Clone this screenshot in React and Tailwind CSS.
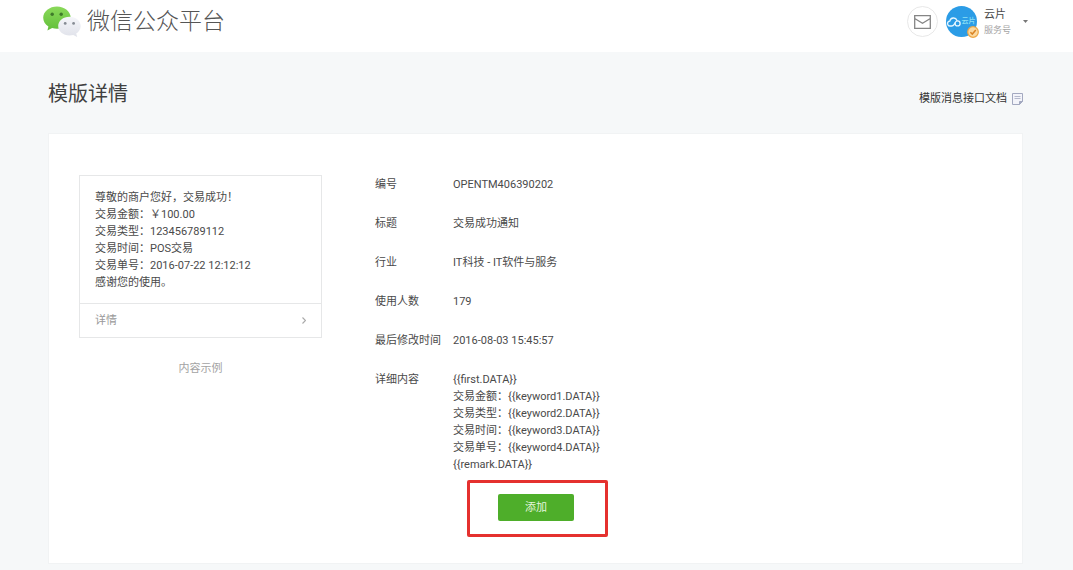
const example = [
  '尊敬的商户您好，交易成功！',
  '交易金额：￥100.00',
  '交易类型：123456789112',
  '交易时间：POS交易',
  '交易单号：2016-07-22 12:12:12',
  '感谢您的使用。',
];

const details = [
  ['编号', ['OPENTM406390202']],
  ['标题', ['交易成功通知']],
  ['行业', ['IT科技 - IT软件与服务']],
  ['使用人数', ['179']],
  ['最后修改时间', ['2016-08-03 15:45:57']],
  [
    '详细内容',
    [
      '{{first.DATA}}',
      '交易金额：{{keyword1.DATA}}',
      '交易类型：{{keyword2.DATA}}',
      '交易时间：{{keyword3.DATA}}',
      '交易单号：{{keyword4.DATA}}',
      '{{remark.DATA}}',
    ],
  ],
];

function WeChatLogo() {
  return (
    <svg className="h-8 w-[38px] shrink-0" viewBox="0 0 38 32" aria-hidden="true">
      <defs>
        <linearGradient id="green" x1="0" y1="0" x2="0" y2="1">
          <stop offset="0" stopColor="#8ad95a" />
          <stop offset="1" stopColor="#62bf3a" />
        </linearGradient>
        <linearGradient id="pale" x1="0" y1="0" x2="0" y2="1">
          <stop offset="0" stopColor="#f5f6fa" />
          <stop offset="1" stopColor="#e0e2ea" />
        </linearGradient>
      </defs>
      <path
        d="M14 .5C6.500.5.200 5.400.200 11.800c0 3.600 2 6.700 5.200 8.700L4.400 24.500l4.700-2.400c1.500.4 3.200.6 4.900.6 7.500 0 13.700-4.700 13.700-10.900S21.500.5 14 .5z"
        fill="url(#green)"
      />
      <circle cx="9.200" cy="8.300" r="1.700" fill="#3f7a2a" />
      <circle cx="18.200" cy="8.300" r="1.700" fill="#3f7a2a" />
      <path
        d="M26.500 10.700c-6.400 0-11.300 4.100-11.300 9.300s4.900 9.400 11.300 9.400c1.300 0 2.600-.2 3.800-.5l3.900 2.100-1-3.400c2.600-1.700 4.500-4.400 4.500-7.600 0-5.200-4.900-9.300-11.200-9.300z"
        fill="url(#pale)"
      />
      <circle cx="22.200" cy="17.400" r="1.400" fill="#868c94" />
      <circle cx="30.600" cy="17.400" r="1.400" fill="#868c94" />
    </svg>
  );
}

function Avatar() {
  return (
    <span className="relative block size-[31px] shrink-0">
      <span className="flex size-full items-center justify-center rounded-full bg-[#2b9ce6] text-[7px] leading-none font-medium text-[#8de0f5]">
        <svg className="h-2.5 w-3.5 shrink-0" viewBox="0 0 14 10" fill="none" stroke="#e6f6ff" strokeWidth="1.300" aria-hidden="true">
          <path d="M8.200 5.800 6.800 7.900C6.300 8.700 5.600 9 4.800 9H3.300a2.500 2.500 0 0 1-.4-5A3.700 3.700 0 0 1 10 3.400" strokeLinecap="round" />
          <circle cx="10.600" cy="6.400" r="2.500" />
        </svg>
        <span className="whitespace-nowrap">云片</span>
      </span>
      <svg className="absolute -right-0.5 -bottom-px size-3" viewBox="0 0 12 12" aria-hidden="true">
        <circle cx="6" cy="6" r="5.300" fill="#fbd9a0" stroke="#eda645" strokeWidth="1.200" />
        <path d="m3.400 6.200 1.900 1.900 3.500-4" fill="none" stroke="#d98324" strokeWidth="1.500" />
      </svg>
    </span>
  );
}

function DocIcon() {
  return (
    <svg className="h-3 w-3 shrink-0" viewBox="0 0 12 12" fill="none" stroke="#a3a9c0" aria-hidden="true">
      <path d="M1.500.5h10v8l-3 3h-7z" fill="#f3f4fa" />
      <path d="M3.500 3.500h6M3.500 5.500h6" stroke="#b4b9cc" />
      <path d="M11.500 8.500h-3v3z" fill="#a3a9c0" />
    </svg>
  );
}

export default function App() {
  return (
    <div className="min-h-screen bg-[#f6f8f9] pb-8 font-['Roboto','Noto_Sans_CJK_SC',sans-serif] text-[11px] leading-[17px] text-[#4a4a4a]">
      <header className="flex h-[52px] items-start justify-between bg-white pr-[45px] pl-[43px]">
        <a href="#" className="flex items-center gap-1.5 pt-1.5">
          <WeChatLogo />
          <span className="text-[23px] leading-8 font-light text-[#555]">微信公众平台</span>
        </a>
        <div className="flex items-center pt-1.5">
          <button type="button" aria-label="消息" className="mr-2 flex size-[31px] items-center justify-center rounded-full border border-[#e8e8e8]">
            <svg className="h-3.5 w-[17px]" viewBox="0 0 17 14" fill="none" stroke="#858585" strokeWidth="1.300" aria-hidden="true">
              <path d="M.7.700h15.600v12.600H.7zM.7 3.500 8.500 8.200l7.800-4.700" />
            </svg>
          </button>
          <button type="button" className="flex items-center text-left">
            <Avatar />
            <span className="ml-[7px] block">
              <span className="block leading-4">云片</span>
              <span className="block text-[9px] leading-3.5 text-[#a5a5a5]">服务号</span>
            </span>
            <svg className="ml-3 h-[3px] w-[5px]" viewBox="0 0 5 3" fill="#777" aria-hidden="true">
              <path d="M0 0h5L2.500 3z" />
            </svg>
          </button>
        </div>
      </header>

      <main className="pr-[50px] pl-12">
        <div className="flex h-[81px] items-center justify-between pt-0.5">
          <h1 className="text-xl leading-7 text-[#404040]">模版详情</h1>
          <a href="#" className="flex items-center gap-1 pt-2.5 text-[#333]">
            模版消息接口文档
            <DocIcon />
          </a>
        </div>

        <section className="flex items-start border border-[#f1f3f4] bg-white pt-[41px] pr-8 pb-[26px] pl-[30px]">
          <div className="w-[243px] shrink-0">
            <div className="border border-[#e6e7e8]">
              <div className="px-[15px] pt-[13px] pb-3">
                {example.map((line) => (
                  <p key={line}>{line}</p>
                ))}
              </div>
              <a href="#" className="flex h-[34px] items-center justify-between border-t border-[#e6e7e8] px-[15px] text-[#999]">
                详情
                <svg className="h-[7px] w-1" viewBox="0 0 4 7" fill="none" stroke="#aaa" strokeWidth="1.200" aria-hidden="true">
                  <path d="m.5.500 3 3-3 3" />
                </svg>
              </a>
            </div>
            <p className="mt-[22px] text-center text-[#a3a3a3]">内容示例</p>
          </div>

          <div className="ml-[53px] flex-1 pt-px">
            <dl className="flex flex-col gap-[22px]">
              {details.map(([label, lines]) => (
                <div key={label} className="flex">
                  <dt className="w-[78px] shrink-0">{label}</dt>
                  <dd>
                    {lines.map((line) => (
                      <p key={line}>{line}</p>
                    ))}
                  </dd>
                </div>
              ))}
            </dl>
            <div className="mt-[7px] ml-[92px] w-fit rounded-xs border-3 border-[#e5312f] pt-[11px] pr-[31px] pb-[13px] pl-7">
              <button type="button" className="block h-[27px] w-[76px] rounded-xs bg-[#4eae2a] text-[#e4f5dd]">
                添加
              </button>
            </div>
          </div>
        </section>
      </main>
    </div>
  );
}
